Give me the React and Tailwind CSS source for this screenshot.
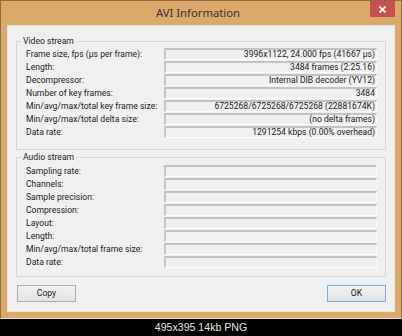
import React from "react";

const video = [
  ["Frame size, fps (µs per frame):", "3996x1122, 24.000 fps (41667 µs)"],
  ["Length:", "3484 frames (2:25.16)"],
  ["Decompressor:", "Internal DIB decoder (YV12)"],
  ["Number of key frames:", "3484"],
  ["Min/avg/max/total key frame size:", "6725268/6725268/6725268 (22881674K)"],
  ["Min/avg/max/total delta size:", "(no delta frames)"],
  ["Data rate:", "1291254 kbps (0.00% overhead)"],
];

const audio = [
  ["Sampling rate:", ""],
  ["Channels:", ""],
  ["Sample precision:", ""],
  ["Compression:", ""],
  ["Layout:", ""],
  ["Length:", ""],
  ["Min/avg/max/total frame size:", ""],
  ["Data rate:", ""],
];

function Row({ label, value }) {
  return (
    <div className="flex h-[13px] items-start">
      <div className="w-[138px] shrink-0 h-[12px] leading-[12px] whitespace-nowrap">{label}</div>
      <div className="w-[213px] h-[12px] border-t-2 border-l-2 border-r border-b border-t-[#c2c2c2] border-l-[#c6c6c6] border-r-[#fbfbfb] border-b-[#fbfbfb] bg-[#f0f0f0] text-right pr-[1px] leading-[9px] whitespace-nowrap">
        {value}
      </div>
    </div>
  );
}

function Group({ title, rows, className, inner }) {
  return (
    <fieldset className={`border border-[#d7d7d7] m-0 p-0 min-w-0 ${className}`}>
      <legend className="ml-[4px] px-[2px] h-[12px] leading-[12px]">{title}</legend>
      <div className={`pl-[9px] pr-[8px] ${inner}`}>
        {rows.map(([l, v], i) => (
          <Row key={i} label={l} value={v} />
        ))}
      </div>
    </fieldset>
  );
}

export default function App() {
  return (
    <div className="w-[402px] h-[336px] flex flex-col bg-black overflow-hidden font-[Roboto]">
      <div className="h-[319px] shrink-0 flex flex-col bg-[#dbaa6b] border border-[#8f6c42] border-b-[#e8e0d4]">
        <div className="h-[24px] shrink-0 grid grid-cols-[1fr_auto_1fr] pr-[6px]">
          <div />
          <div className="text-[11.3px] text-[#333] leading-[24px] font-['Noto_Sans']">AVI Information</div>
          <div className="flex justify-end items-start">
            <div className="w-[25px] h-[16px] bg-[#c75050] flex items-center justify-center">
              <svg width="7" height="7" viewBox="0 0 7 7">
                <path d="M0.5 0.5 L6.5 6.5 M6.5 0.5 L0.5 6.5" stroke="#fff" strokeWidth="1.6" />
              </svg>
            </div>
          </div>
        </div>
        <div className="flex-1 mx-[6px] mb-[6px] bg-[#f0f0f0] border border-[#e4e4e4] flex flex-col px-[8px] text-[8.6px] text-[#1c1c1c]">
          <Group title="Video stream" rows={video} className="mt-[9px]" inner="pt-[1px] pb-[10px]" />
          <Group title="Audio stream" rows={audio} className="mt-[1px]" inner="pt-[2px] pb-[7px]" />
          <div className="flex justify-between mt-[8px] pl-[1px]">
            <div className="w-[59px] h-[17px] border border-[#adadad] bg-gradient-to-b from-[#f2f2f2] to-[#e3e3e3] flex items-center justify-center text-[#222]">
              Copy
            </div>
            <div className="w-[59px] h-[17px] border border-[#6fb0ee] bg-gradient-to-b from-[#f2f2f2] to-[#e3e3e3] flex items-center justify-center text-[#222]">
              OK
            </div>
          </div>
        </div>
      </div>
      <div className="flex-1 flex items-center justify-center text-[#e6e6e6] text-[10.6px] font-['Liberation_Sans']">
        495x395 14kb PNG
      </div>
    </div>
  );
}
